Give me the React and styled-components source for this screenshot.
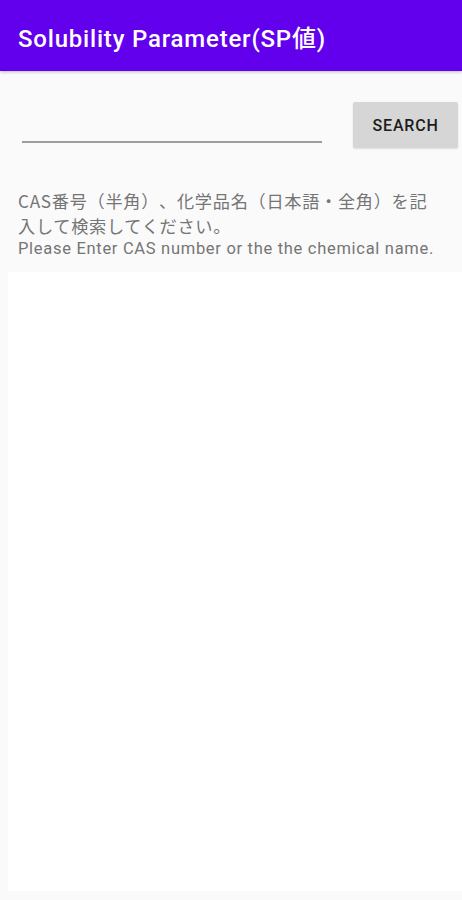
import React from 'react';
import styled, { createGlobalStyle } from 'styled-components';

const GlobalStyle = createGlobalStyle`
  html, body {
    margin: 0;
    padding: 0;
    background: #fafafa;
  }
  body {
    font-family: Roboto, "Noto Sans CJK JP", sans-serif;
  }
`;

const Screen = styled.div`
  display: flex;
  flex-direction: column;
  width: 462px;
  height: 900px;
  background: #fafafa;
  overflow: hidden;
`;

const AppBar = styled.header`
  display: flex;
  align-items: center;
  height: 71px;
  padding: 2px 18px 0;
  box-sizing: border-box;
  background: #6200ee;
  color: #ffffff;
  box-shadow: 0 1px 3px rgba(0, 0, 0, 0.25);
`;

const Title = styled.h1`
  margin: 0;
  font-size: 24px;
  font-weight: 500;
  font-family: Roboto, "Noto Sans CJK JP", sans-serif;
  letter-spacing: 0.8px;
`;

const SearchRow = styled.div`
  display: flex;
  align-items: flex-start;
  padding: 31px 4px 0 22px;
`;

const Field = styled.input`
  box-sizing: border-box;
  width: 301px;
  height: 41px;
  padding: 0;
  border: none;
  border-bottom: 2px solid #9e9e9e;
  background: transparent;
  font-family: Roboto, sans-serif;
  font-size: 16px;
  outline: none;
`;

const Button = styled.button`
  margin-left: 31px;
  width: 105px;
  height: 46px;
  border: none;
  border-radius: 2px;
  background: #d6d6d6;
  color: #1c1c1c;
  font-family: Roboto, sans-serif;
  font-size: 16px;
  font-weight: 500;
  letter-spacing: 0.8px;
  box-shadow: 0 1px 2px rgba(0, 0, 0, 0.12);
`;

const Help = styled.div`
  padding: 40px 24px 0 18px;
  color: #757575;
`;

const HelpJa = styled.p`
  margin: 0;
  font-family: "Noto Sans CJK JP", sans-serif;
  font-size: 17.2px;
  letter-spacing: 0.7px;
  line-height: 25px;
  text-spacing-trim: space-all;
`;

const HelpEn = styled.p`
  margin: 0;
  font-family: Roboto, sans-serif;
  font-size: 16.5px;
  letter-spacing: 0.7px;
  line-height: 22px;
  white-space: nowrap;
`;

const Results = styled.div`
  flex: 1;
  margin: 12px 0 9px 8px;
  background: #ffffff;
`;

export default function App() {
  return (
    <>
      <GlobalStyle />
      <Screen>
        <AppBar>
          <Title>Solubility Parameter(SP値)</Title>
        </AppBar>
        <SearchRow>
          <Field type="text" />
          <Button>SEARCH</Button>
        </SearchRow>
        <Help>
          <HelpJa>CAS番号（半角）、化学品名（日本語・全角）を記入して検索してください。</HelpJa>
          <HelpEn>Please Enter CAS number or the the chemical name.</HelpEn>
        </Help>
        <Results />
      </Screen>
    </>
  );
}
